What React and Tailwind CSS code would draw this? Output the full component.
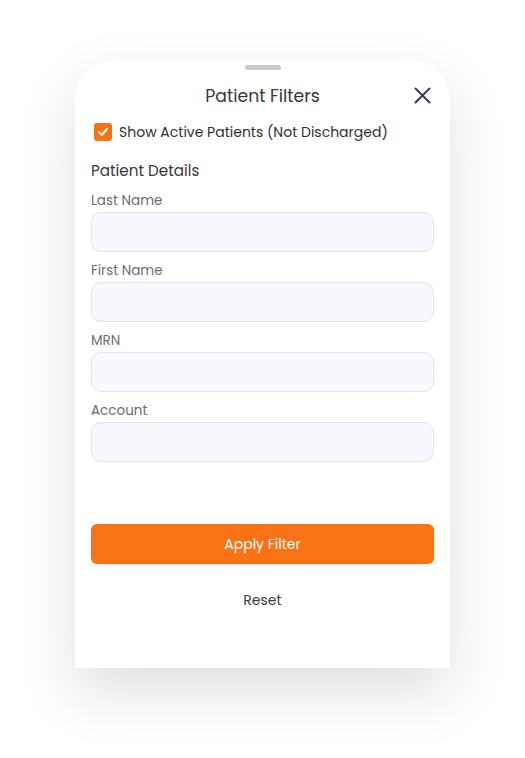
import React from "react";

function Field({ label }) {
  return (
    <div className="mt-[8px]">
      <div className="pt-[1px] text-[13.5px] leading-[20px] text-[#6b6b70]">{label}</div>
      <input
        type="text"
        className="mt-[1px] block h-[40px] w-full rounded-[10px] border border-[#e3e4e8] bg-[#f7f8fd] px-3 outline-none"
      />
    </div>
  );
}

export default function App() {
  return (
    <div className="min-h-[758px] bg-white pt-[60px] pl-[75px] font-['Poppins','Open_Sans',sans-serif]">
      <div className="flex h-[608px] w-[375px] flex-col rounded-t-[40px] bg-white px-[16px] pt-[5px] shadow-[0_24px_60px_rgba(0,0,0,0.13)]">
        <div className="mx-auto h-[5px] w-[36px] rounded-full bg-[#c8c8c8]" />

        <div className="relative mt-[9px] flex h-[36px] items-center justify-center">
          <h2 className="text-[17.3px] font-normal text-[#38383c]">Patient Filters</h2>
          <button className="absolute right-[3px] top-[8px] text-[#334155]">
            <svg width="17" height="17" viewBox="0 0 17 17" fill="none" stroke="currentColor" strokeWidth="2" strokeLinecap="round">
              <path d="M1.5 1.5 L15.5 15.5 M15.5 1.5 L1.5 15.5" />
            </svg>
          </button>
        </div>

        <label className="mt-[7px] flex h-[20px] items-center gap-[8px] pl-[3px]">
          <span className="flex h-[18px] w-[18px] items-center justify-center rounded-[3px] bg-[#f97316]">
            <svg width="12" height="12" viewBox="0 0 12 12" fill="none" stroke="white" strokeWidth="2" strokeLinecap="round" strokeLinejoin="round">
              <path d="M2 6.3 L4.8 9 L10 3" />
            </svg>
          </span>
          <span className="-ml-[1px] text-[14px] text-[#2f2f33]">Show Active Patients (Not Discharged)</span>
        </label>

        <div className="mt-[18px] text-[15.2px] font-normal leading-[22px] text-[#38383c]">Patient Details</div>

        <Field label="Last Name" />
        <Field label="First Name" />
        <Field label="MRN" />
        <Field label="Account" />

        <button className="mt-[62px] h-[40px] w-full rounded-[6px] bg-[#f97316] text-[14px] font-normal text-white shadow-[0_3px_4px_rgba(96,165,250,0.12)]">
          Apply Filter
        </button>

        <button className="mx-auto mt-[26px] h-[20px] text-[14px] font-normal text-[#3a3a3e]">Reset</button>
      </div>
    </div>
  );
}
